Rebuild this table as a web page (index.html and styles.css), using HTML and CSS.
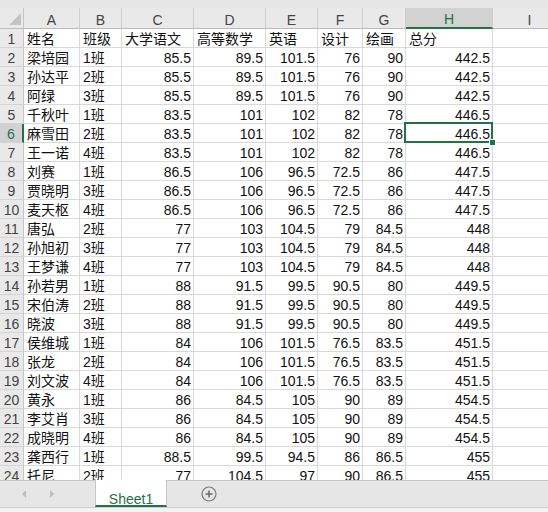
FILE: index.html
```html
<!DOCTYPE html>
<html lang="zh">
<head>
<meta charset="utf-8">
<title>Sheet1</title>
<link rel="stylesheet" href="styles.css">
</head>
<body>
<div class="app">
  <div class="topstrip"></div>
  <div class="sheet">
    <table class="grid">
      <colgroup>
        <col class="c-rh"><col class="c-a"><col class="c-b"><col class="c-c"><col class="c-d"><col class="c-e"><col class="c-f"><col class="c-g"><col class="c-h"><col class="c-i">
      </colgroup>
      <thead>
        <tr class="colhead">
          <th class="corner"><svg width="24" height="20" viewBox="0 0 24 20"><polygon points="21,5 21,17 9,17" fill="#c4c4c4"/></svg></th>
          <th>A</th><th>B</th><th>C</th><th>D</th><th>E</th><th>F</th><th>G</th><th class="sel">H</th><th>I</th>
        </tr>
      </thead>
      <tbody>
        <tr><th>1</th><td>姓名</td><td>班级</td><td>大学语文</td><td>高等数学</td><td>英语</td><td>设计</td><td>绘画</td><td>总分</td><td></td></tr>
        <tr><th>2</th><td>梁培园</td><td>1班</td><td class="n">85.5</td><td class="n">89.5</td><td class="n">101.5</td><td class="n">76</td><td class="n">90</td><td class="n">442.5</td><td></td></tr>
        <tr><th>3</th><td>孙达平</td><td>2班</td><td class="n">85.5</td><td class="n">89.5</td><td class="n">101.5</td><td class="n">76</td><td class="n">90</td><td class="n">442.5</td><td></td></tr>
        <tr><th>4</th><td>阿绿</td><td>3班</td><td class="n">85.5</td><td class="n">89.5</td><td class="n">101.5</td><td class="n">76</td><td class="n">90</td><td class="n">442.5</td><td></td></tr>
        <tr><th>5</th><td>千秋叶</td><td>1班</td><td class="n">83.5</td><td class="n">101</td><td class="n">102</td><td class="n">82</td><td class="n">78</td><td class="n">446.5</td><td></td></tr>
        <tr><th class="sel">6</th><td>麻雪田</td><td>2班</td><td class="n">83.5</td><td class="n">101</td><td class="n">102</td><td class="n">82</td><td class="n">78</td><td class="n active">446.5</td><td></td></tr>
        <tr><th>7</th><td>王一诺</td><td>4班</td><td class="n">83.5</td><td class="n">101</td><td class="n">102</td><td class="n">82</td><td class="n">78</td><td class="n">446.5</td><td></td></tr>
        <tr><th>8</th><td>刘赛</td><td>1班</td><td class="n">86.5</td><td class="n">106</td><td class="n">96.5</td><td class="n">72.5</td><td class="n">86</td><td class="n">447.5</td><td></td></tr>
        <tr><th>9</th><td>贾晓明</td><td>3班</td><td class="n">86.5</td><td class="n">106</td><td class="n">96.5</td><td class="n">72.5</td><td class="n">86</td><td class="n">447.5</td><td></td></tr>
        <tr><th>10</th><td>麦天枢</td><td>4班</td><td class="n">86.5</td><td class="n">106</td><td class="n">96.5</td><td class="n">72.5</td><td class="n">86</td><td class="n">447.5</td><td></td></tr>
        <tr><th>11</th><td>唐弘</td><td>2班</td><td class="n">77</td><td class="n">103</td><td class="n">104.5</td><td class="n">79</td><td class="n">84.5</td><td class="n">448</td><td></td></tr>
        <tr><th>12</th><td>孙旭初</td><td>3班</td><td class="n">77</td><td class="n">103</td><td class="n">104.5</td><td class="n">79</td><td class="n">84.5</td><td class="n">448</td><td></td></tr>
        <tr><th>13</th><td>王梦谦</td><td>4班</td><td class="n">77</td><td class="n">103</td><td class="n">104.5</td><td class="n">79</td><td class="n">84.5</td><td class="n">448</td><td></td></tr>
        <tr><th>14</th><td>孙若男</td><td>1班</td><td class="n">88</td><td class="n">91.5</td><td class="n">99.5</td><td class="n">90.5</td><td class="n">80</td><td class="n">449.5</td><td></td></tr>
        <tr><th>15</th><td>宋伯涛</td><td>2班</td><td class="n">88</td><td class="n">91.5</td><td class="n">99.5</td><td class="n">90.5</td><td class="n">80</td><td class="n">449.5</td><td></td></tr>
        <tr><th>16</th><td>晓波</td><td>3班</td><td class="n">88</td><td class="n">91.5</td><td class="n">99.5</td><td class="n">90.5</td><td class="n">80</td><td class="n">449.5</td><td></td></tr>
        <tr><th>17</th><td>侯维城</td><td>1班</td><td class="n">84</td><td class="n">106</td><td class="n">101.5</td><td class="n">76.5</td><td class="n">83.5</td><td class="n">451.5</td><td></td></tr>
        <tr><th>18</th><td>张龙</td><td>2班</td><td class="n">84</td><td class="n">106</td><td class="n">101.5</td><td class="n">76.5</td><td class="n">83.5</td><td class="n">451.5</td><td></td></tr>
        <tr><th>19</th><td>刘文波</td><td>4班</td><td class="n">84</td><td class="n">106</td><td class="n">101.5</td><td class="n">76.5</td><td class="n">83.5</td><td class="n">451.5</td><td></td></tr>
        <tr><th>20</th><td>黄永</td><td>1班</td><td class="n">86</td><td class="n">84.5</td><td class="n">105</td><td class="n">90</td><td class="n">89</td><td class="n">454.5</td><td></td></tr>
        <tr><th>21</th><td>李艾肖</td><td>3班</td><td class="n">86</td><td class="n">84.5</td><td class="n">105</td><td class="n">90</td><td class="n">89</td><td class="n">454.5</td><td></td></tr>
        <tr><th>22</th><td>成晓明</td><td>4班</td><td class="n">86</td><td class="n">84.5</td><td class="n">105</td><td class="n">90</td><td class="n">89</td><td class="n">454.5</td><td></td></tr>
        <tr><th>23</th><td>龚西行</td><td>1班</td><td class="n">88.5</td><td class="n">99.5</td><td class="n">94.5</td><td class="n">86</td><td class="n">86.5</td><td class="n">455</td><td></td></tr>
        <tr><th>24</th><td>托尼</td><td>2班</td><td class="n">77</td><td class="n">104.5</td><td class="n">97</td><td class="n">90</td><td class="n">86.5</td><td class="n">455</td><td></td></tr>
      </tbody>
    </table>
  </div>
  <div class="tabbar">
    <div class="nav">
      <span class="arrow left"></span>
      <span class="arrow right"></span>
    </div>
    <div class="tab">Sheet1</div>
    <div class="add">
      <svg width="16" height="16" viewBox="0 0 16 16"><circle cx="8" cy="8" r="7" fill="none" stroke="#7a7a7a" stroke-width="1.2"/><path d="M8 4.5v7M4.5 8h7" stroke="#6a6a6a" stroke-width="1.5"/></svg>
    </div>
  </div>
  <div class="status"></div>
</div>
</body>
</html>
```
FILE: styles.css
```css
html, body {
  margin: 0;
  padding: 0;
}
body {
  width: 548px;
  height: 512px;
  overflow: hidden;
  background: #ffffff;
  font-family: "Liberation Sans", "Noto Sans CJK SC", sans-serif;
  font-size: 14px;
  color: #111;
}
.app {
  display: flex;
  flex-direction: column;
  width: 548px;
  height: 512px;
}
.topstrip {
  height: 8px;
  background: #e6e6e6;
  flex: none;
}
.sheet {
  height: 472px;
  overflow: hidden;
  flex: none;
}
.grid {
  table-layout: fixed;
  width: 567px;
  border-collapse: separate;
  border-spacing: 0;
}
.c-rh { width: 24px; }
.c-a { width: 56px; }
.c-b { width: 42px; }
.c-c { width: 72px; }
.c-d { width: 72px; }
.c-e { width: 52px; }
.c-f { width: 45px; }
.c-g { width: 43px; }
.c-h { width: 87px; }
.c-i { width: 74px; }

.grid td, .grid th {
  padding: 2px 0 0 0;
  height: 16px;
  line-height: 16px;
  border-right: 1px solid #d9d9d9;
  border-bottom: 1px solid #d9d9d9;
  white-space: nowrap;
  overflow: hidden;
  vertical-align: bottom;
  font-weight: normal;
}
.grid td {
  padding-left: 3px;
  text-align: left;
  color: #111;
}
.grid td.n {
  text-align: right;
  padding-left: 0;
  padding-right: 2px;
}
.grid tbody th {
  background: #e9e9e9;
  color: #444;
  text-align: center;
  border-right: 1px solid #c6c6c6;
  border-bottom: 1px solid #d4d4d4;
}
.colhead th {
  height: 16px;
  padding-top: 3px;
  background: #e9e9e9;
  color: #444;
  text-align: center;
  border-right: 1px solid #cfcfcf;
  border-bottom: 1px solid #bcbcbc;
}
.colhead th.corner {
  padding: 0;
  height: 19px;
  vertical-align: top;
  border-right: 1px solid #c6c6c6;
}
.corner svg { display: block; }
.colhead th.sel {
  background: #d2d2d2;
  color: #217346;
  border-bottom: 2px solid #217346;
}
.grid tbody th.sel {
  background: #d2d2d2;
  color: #217346;
  border-right: 2px solid #217346;
}
.grid td.active {
  position: relative;
  overflow: visible;
}
.grid td.active::after {
  content: "";
  position: absolute;
  left: -2px;
  top: -2px;
  right: -1px;
  bottom: -1px;
  border: 2px solid #217346;
}
.grid td.active::before {
  content: "";
  position: absolute;
  right: -4px;
  bottom: -4px;
  width: 5px;
  height: 5px;
  background: #217346;
  border: 1px solid #fff;
  z-index: 2;
}

.tabbar {
  flex: none;
  height: 26px;
  background: #e6e6e6;
  border-top: 1px solid #c6c6c6;
  display: flex;
  align-items: stretch;
}
.nav {
  width: 95px;
  display: flex;
  align-items: center;
  padding-left: 22px;
  gap: 24px;
  box-sizing: border-box;
}
.arrow {
  width: 0;
  height: 0;
  border-top: 4px solid transparent;
  border-bottom: 4px solid transparent;
}
.arrow.left { border-right: 4px solid #bdbdbd; }
.arrow.right { border-left: 4px solid #bdbdbd; }
.tab {
  width: 72px;
  box-sizing: border-box;
  background: #ffffff;
  border-left: 1px solid #c6c6c6;
  border-right: 1px solid #c6c6c6;
  border-bottom: 2px solid #217346;
  margin-top: -1px;
  color: #217346;
  text-align: center;
  font-size: 14px;
  line-height: 14px;
  padding-top: 12px;
  overflow: hidden;
}
.add {
  display: flex;
  align-items: center;
  padding-left: 34px;
}
.add svg { display: block; }
.status {
  flex: none;
  height: 5px;
  background: #f3f3f3;
  border-top: 1px solid #cfcfcf;
}
```
